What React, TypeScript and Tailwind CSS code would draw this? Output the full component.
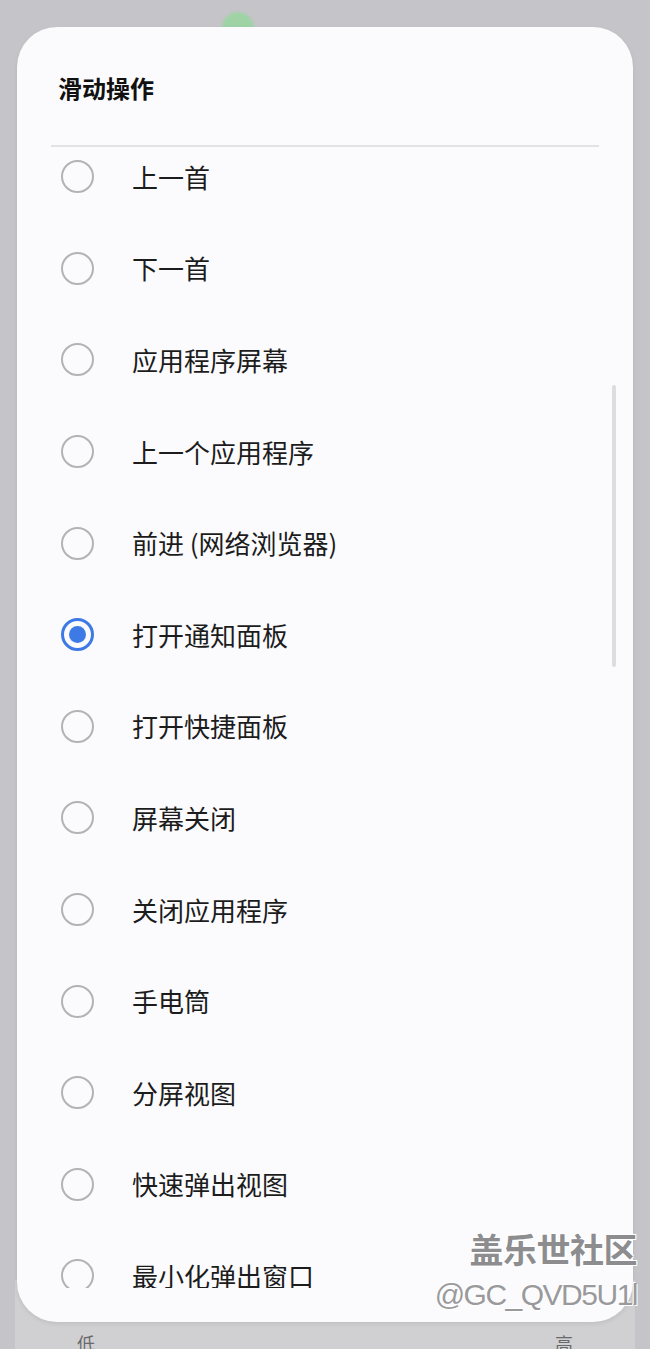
const options = [
  "上一首",
  "下一首",
  "应用程序屏幕",
  "上一个应用程序",
  "前进 (网络浏览器)",
  "打开通知面板",
  "打开快捷面板",
  "屏幕关闭",
  "关闭应用程序",
  "手电筒",
  "分屏视图",
  "快速弹出视图",
  "最小化弹出窗口",
];

const selected = "打开通知面板";

function Radio({ checked }: { checked: boolean }) {
  if (checked) {
    return (
      <span className="w-[33px] h-[33px] rounded-full border-[3.5px] border-[#3d7ae6] flex items-center justify-center shrink-0">
        <span className="w-[17px] h-[17px] rounded-full bg-[#3d7ae6]" />
      </span>
    );
  }
  return <span className="w-[33px] h-[33px] rounded-full border-[2.5px] border-[#b3b3b6] shrink-0" />;
}

export default function App() {
  return (
    <div
      className="relative w-[650px] h-[1349px] overflow-hidden bg-[#c5c4c9]"
      style={{ fontFamily: '"Noto Sans CJK SC", "Noto Sans", sans-serif' }}
    >
      {/* page behind the dialog */}
      <div className="absolute left-[15px] right-[15px] top-[1280px] bottom-0 bg-[#d0d0d3] flex items-end justify-between px-[62px] text-[18px] text-[#6a6a6d] leading-none">
        <span className="translate-y-[3px]">低</span>
        <span className="translate-y-[3px]">高</span>
      </div>
      <div className="absolute left-[222px] top-[12px] w-[32px] h-[32px] rounded-full bg-[#9fd3a6] blur-[1px]" />

      {/* dialog */}
      <div className="absolute left-[17px] top-[27px] w-[616px] h-[1295px] rounded-[40px] bg-[#fbfbfe] flex flex-col shadow-[0_2px_4px_rgba(0,0,0,0.08)]">
        <div className="h-[118px] pl-[41px] pt-[45px] shrink-0">
          <h1 className="text-[24px] font-bold text-[#111] leading-[32px]">滑动操作</h1>
        </div>
        <div className="mx-[34px] h-[2px] bg-[#e2e2e6] shrink-0" />
        <div className="relative flex-1 overflow-hidden mb-[34px]">
          <div className="-mt-[16px]">
            {options.map((o) => (
              <div key={o} className="h-[91.6px] flex items-center pl-[44px]">
                <Radio checked={o === selected} />
                <span className="ml-[38px] text-[26px] text-[#1c1c1c] leading-none">{o}</span>
              </div>
            ))}
          </div>
          <div className="absolute right-[17px] top-[238px] w-[4px] h-[282px] rounded-full bg-[#dcdce1]" />
        </div>
      </div>

      {/* watermark */}
      <div className="absolute right-[13px] top-[1232px] flex flex-col items-end leading-none">
        <span
          className="text-[34px] font-bold text-[#8d8d8f] tracking-[-0.5px]"
          style={{ textShadow: "1px 1px 0 #fff, -1px -1px 0 #fff, 1px -1px 0 #fff, -1px 1px 0 #fff" }}
        >
          盖乐世社区
        </span>
        <span
          className="mt-[14px] text-[30px] text-[#9a9a9c] tracking-[-1.5px]"
          style={{ fontFamily: '"Liberation Sans", sans-serif', textShadow: "1px 1px 0 #fff, -1px -1px 0 #fff" }}
        >
          @GC_QVD5U1l
        </span>
      </div>
    </div>
  );
}
